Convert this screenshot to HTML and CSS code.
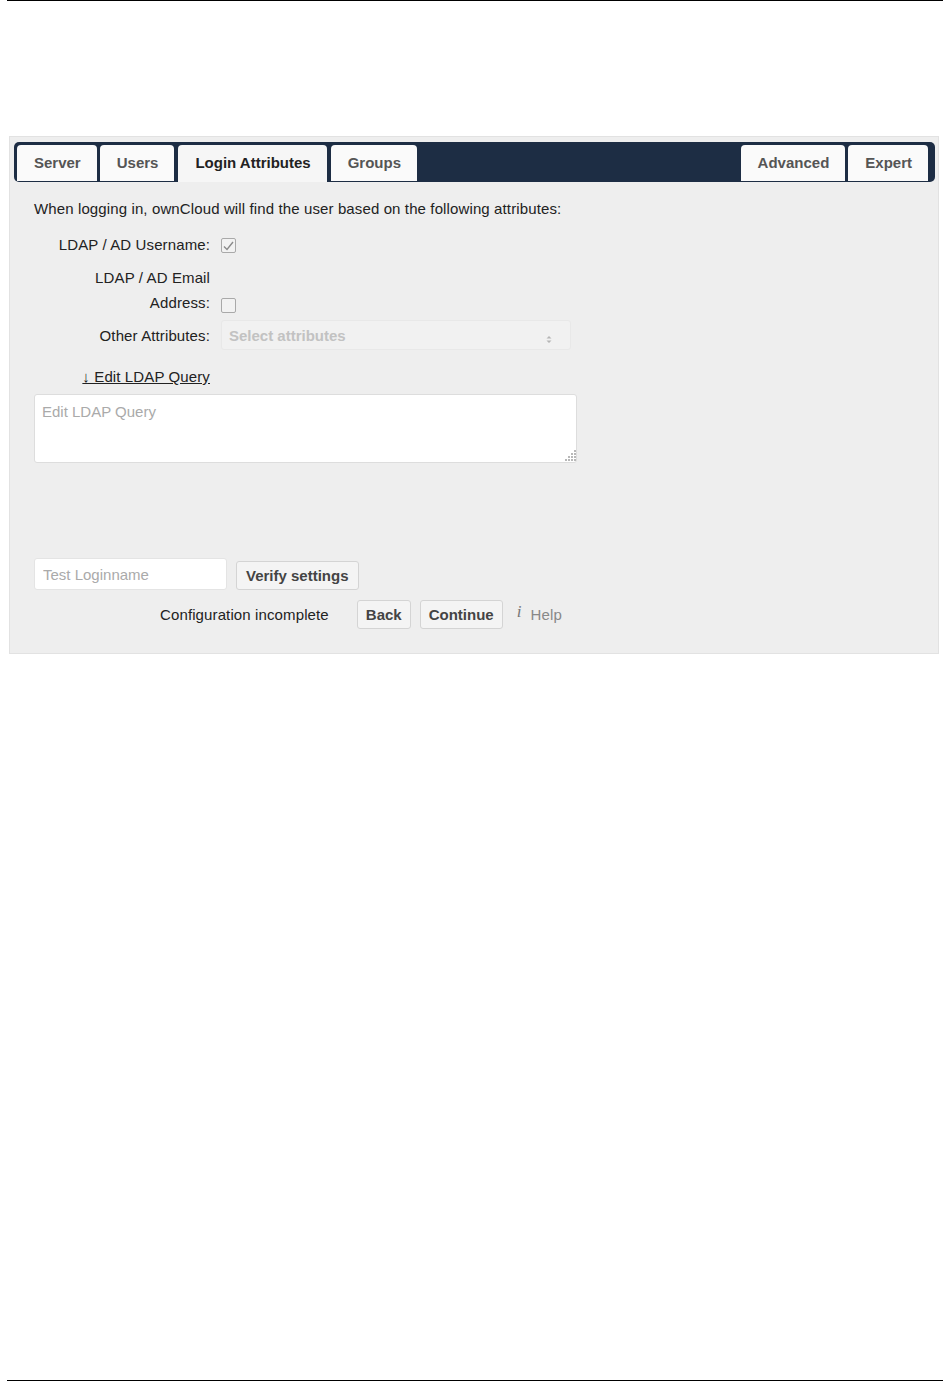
FILE: index.html
```html
<!DOCTYPE html>
<html lang="en">
<head>
    <meta charset="UTF-8">
    <title>LDAP Login Attributes</title>
    <link rel="stylesheet" href="styles.css">
</head>
<body>
    <div class="sheet">
        <div class="rule"></div>

        <div class="panel">
            <ul class="tabs">
                <li>Server</li>
                <li>Users</li>
                <li class="active">Login Attributes</li>
                <li>Groups</li>
                <li class="push">Advanced</li>
                <li>Expert</li>
            </ul>

            <div class="tab-body">
                <p class="intro">When logging in, ownCloud will find the user based on the following attributes:</p>

                <div class="row row-user">
                    <label class="lbl">LDAP / AD Username:</label>
                    <span class="check on">
                        <svg width="11" height="10" viewBox="0 0 11 10"><path d="M1 5.5 L4 8.5 L10 1" fill="none" stroke="#8a8a8a" stroke-width="1.4"/></svg>
                    </span>
                </div>

                <div class="row row-mail">
                    <label class="lbl">LDAP / AD Email<br>Address:</label>
                    <span class="check"></span>
                </div>

                <div class="row row-other">
                    <label class="lbl">Other Attributes:</label>
                    <div class="select">
                        <span>Select attributes</span>
                        <svg class="arrows" width="6" height="9" viewBox="0 0 6 9"><path d="M0.5 3.5 L3 1 L5.5 3.5 Z M0.5 5.5 L3 8 L5.5 5.5 Z" fill="#b5b5b5"/></svg>
                    </div>
                </div>

                <div class="row row-link">
                    <a class="lbl toggle" href="#">&darr; Edit LDAP Query</a>
                </div>

                <div class="query-wrap">
                    <textarea class="query" placeholder="Edit LDAP Query"></textarea>
                    <svg class="grip" width="13" height="13" viewBox="0 0 13 13">
                        <g fill="#b8b8b8">
                            <rect x="10" y="1" width="2" height="2"/>
                            <rect x="7" y="4" width="2" height="2"/><rect x="10" y="4" width="2" height="2"/>
                            <rect x="4" y="7" width="2" height="2"/><rect x="7" y="7" width="2" height="2"/><rect x="10" y="7" width="2" height="2"/>
                            <rect x="1" y="10" width="2" height="2"/><rect x="4" y="10" width="2" height="2"/><rect x="7" y="10" width="2" height="2"/><rect x="10" y="10" width="2" height="2"/>
                        </g>
                    </svg>
                </div>

                <div class="test-row">
                    <input class="login" type="text" placeholder="Test Loginname">
                    <button class="btn">Verify settings</button>
                </div>

                <div class="wizard-row">
                    <span class="status">Configuration incomplete</span>
                    <button class="btn">Back</button>
                    <button class="btn">Continue</button>
                    <a class="help" href="#"><i>i</i>Help</a>
                </div>
            </div>
        </div>

        <div class="rule bottom"></div>
    </div>
</body>
</html>
```

FILE: styles.css
```css
*{
    margin: 0;
    padding: 0;
    box-sizing: border-box;
}

body{
    font-family: "Liberation Sans", Arial, sans-serif;
    font-size: 15px;
    letter-spacing: 0.12px;
    color: #222;
    background: #fff;
}

.sheet{
    height: 1382px;
    display: flex;
    flex-direction: column;
}

.rule{
    height: 1px;
    background: #000;
    margin: 0 7px;
}

.rule.bottom{
    margin-top: auto;
    margin-bottom: 1px;
}

.panel{
    margin: 135px 0 0 9px;
    width: 930px;
    background: #eee;
    border: 1px solid #e2e2e2;
    padding: 5px 3px 24px 4px;
}

/* tab bar */
.tabs{
    list-style: none;
    display: flex;
    background: #1d2d44;
    border-radius: 5px;
    padding: 3px 7px 0 3px;
    height: 40px;
    letter-spacing: 0;
}

.tabs li{
    height: 36px;
    line-height: 36px;
    padding: 0 16px 0 17px;
    margin-right: 4px;
    background: #fafafa;
    border-radius: 4px 4px 0 0;
    font-weight: bold;
    color: #555;
}

.tabs li:first-child{
    margin-right: 3px;
}

.tabs li.active{
    height: 37px;
    background: #f6f6f6;
    color: #222;
}

.tabs li.push{
    margin-left: auto;
    margin-right: 3px;
}

.tabs li:last-child{
    margin-right: 0;
}

/* body of the tab */
.tab-body{
    padding: 18px 0 0 20px;
}

.intro{
    line-height: 18px;
}

.row{
    display: flex;
    align-items: center;
}

.lbl{
    width: 176px;
    text-align: right;
    margin-right: 11px;
    line-height: 25px;
}

.row-user{
    margin-top: 14px;
    height: 25px;
}

.row-mail{
    margin-top: 8px;
    align-items: flex-end;
}

.row-mail .check{
    margin-bottom: 2px;
}

.check{
    width: 15px;
    height: 15px;
    border: 1px solid #a9a9a9;
    border-radius: 2px;
    background: #f2f2f2;
    display: flex;
    align-items: center;
    justify-content: center;
    margin-top: 2px;
}

.row-other{
    margin-top: 5px;
}

.select{
    width: 350px;
    height: 30px;
    background: #f1f1f1;
    border: 1px solid #e8e8e8;
    border-radius: 3px;
    display: flex;
    align-items: center;
    justify-content: space-between;
    padding: 0 18px 0 7px;
    color: #c2c2c2;
    font-weight: bold;
    letter-spacing: 0;
}

.select .arrows{
    margin-top: 8px;
}

.row-link{
    margin-top: 18px;
}

.toggle{
    line-height: 18px;
    color: #222;
    text-decoration: underline;
}

.query-wrap{
    position: relative;
    margin-top: 8px;
    width: 543px;
}

.query{
    display: block;
    width: 543px;
    height: 69px;
    background: #fff;
    border: 1px solid #ddd;
    border-radius: 3px;
    padding: 8px 7px;
    font-family: "Liberation Sans", Arial, sans-serif;
    font-size: 15px;
    color: #222;
    resize: none;
}

.grip{
    position: absolute;
    right: 0;
    bottom: 1px;
}

.query::placeholder,
.login::placeholder{
    color: #aaa;
}

.test-row{
    margin-top: 95px;
    display: flex;
    align-items: center;
}

.login{
    width: 193px;
    height: 32px;
    background: #fff;
    border: 1px solid #e4e4e4;
    border-radius: 3px;
    padding: 0 8px;
    font-family: "Liberation Sans", Arial, sans-serif;
    font-size: 15px;
    margin-right: 9px;
}

.btn{
    height: 29px;
    padding: 0 9px;
    background: #f4f4f4;
    border: 1px solid #d4d4d4;
    border-radius: 3px;
    font-family: "Liberation Sans", Arial, sans-serif;
    font-size: 15px;
    font-weight: bold;
    letter-spacing: 0;
    color: #444;
    margin-top: 2px;
}

.wizard-row{
    margin-top: 10px;
    display: flex;
    align-items: center;
    padding-left: 126px;
}

.wizard-row .btn{
    margin: 0 9px 0 0;
    padding: 0 8px;
}

.status{
    margin-right: 28px;
    color: #222;
}

.help{
    margin-left: 5px;
    color: #888;
    text-decoration: none;
    display: flex;
    align-items: baseline;
}

.help i{
    font-family: "Liberation Serif", serif;
    font-size: 17px;
    color: #777;
    margin-right: 9px;
    position: relative;
    top: -3px;
}
```
